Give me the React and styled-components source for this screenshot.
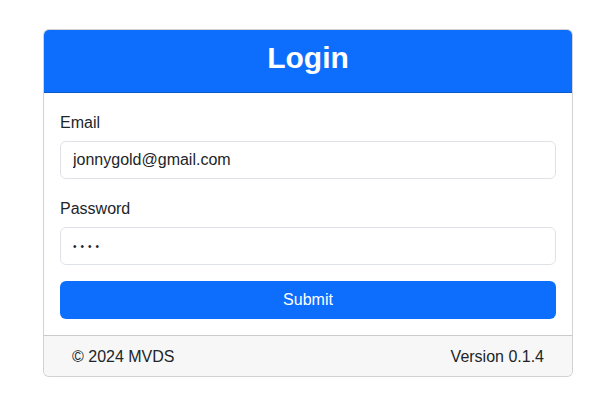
import styled, { createGlobalStyle } from "styled-components";

const GlobalStyle = createGlobalStyle`
    body {
        margin: 0;
        background: #fff;
        font-family: "Liberation Sans", Arial, Helvetica, sans-serif;
        color: #212529;
        font-size: 16px;
        line-height: 1.5;
    }
`

const Page = styled.div`
    padding: 29px 0 0 43px;
`
const Card = styled.div`
    width: 530px;
    box-sizing: border-box;
    border: 1px solid rgba(0, 0, 0, 0.175);
    border-radius: 6px;
    overflow: hidden;
    background: #fff;
`
const Header = styled.div`
    height: 62px;
    background-color: #0d6efd;
    border-bottom: 1px solid rgba(0, 0, 0, 0.2);
    display: flex;
    align-items: center;
    justify-content: center;
`
const Title = styled.h2`
    margin: 0;
    color: #fff;
    font-size: 30px;
    font-weight: 700;
    line-height: 1.2;
    padding-bottom: 7px;
`
const Body = styled.form`
    padding: 16px;
`
const Field = styled.div`
    margin-bottom: 16px;
`
const Label = styled.label`
    display: block;
    margin-bottom: 8px;
    line-height: 24px;
    padding-top: 2px;
    height: 24px;
    box-sizing: border-box;
`
const Input = styled.input`
    display: block;
    width: 100%;
    height: 38px;
    box-sizing: border-box;
    padding: 6px 12px;
    font: inherit;
    font-size: ${(p) => (p.type === "password" ? "10px" : "16px")};
    letter-spacing: ${(p) => (p.type === "password" ? "4px" : "0")};
    color: #212529;
    border: 1px solid #dee2e6;
    border-radius: 6px;
    background: #fff;
    outline: none;
`
const Button = styled.button`
    display: block;
    width: 100%;
    height: 38px;
    border: none;
    border-radius: 6px;
    background-color: #0d6efd;
    color: #fff;
    font: inherit;
    cursor: pointer;
`
const Footer = styled.div`
    border-top: 1px solid rgba(0, 0, 0, 0.175);
    background-color: #f7f7f7;
    padding: 8px 16px;
`
const FooterRow = styled.div`
    display: flex;
    justify-content: space-between;
    padding: 1px 12px 0;
    height: 24px;
    box-sizing: border-box;
    line-height: 24px;
`

const App = () => {
    return (
        <>
            <GlobalStyle />
            <Page>
                <Card>
                    <Header>
                        <Title>Login</Title>
                    </Header>
                    <Body onSubmit={(e) => e.preventDefault()}>
                        <Field>
                            <Label>Email</Label>
                            <Input type="email" defaultValue="jonnygold@gmail.com" />
                        </Field>
                        <Field>
                            <Label>Password</Label>
                            <Input type="password" defaultValue="1234" />
                        </Field>
                        <Button type="submit">Submit</Button>
                    </Body>
                    <Footer>
                        <FooterRow>
                            <span>© 2024 MVDS</span>
                            <span>Version 0.1.4</span>
                        </FooterRow>
                    </Footer>
                </Card>
            </Page>
        </>
    )
}

export default App;
